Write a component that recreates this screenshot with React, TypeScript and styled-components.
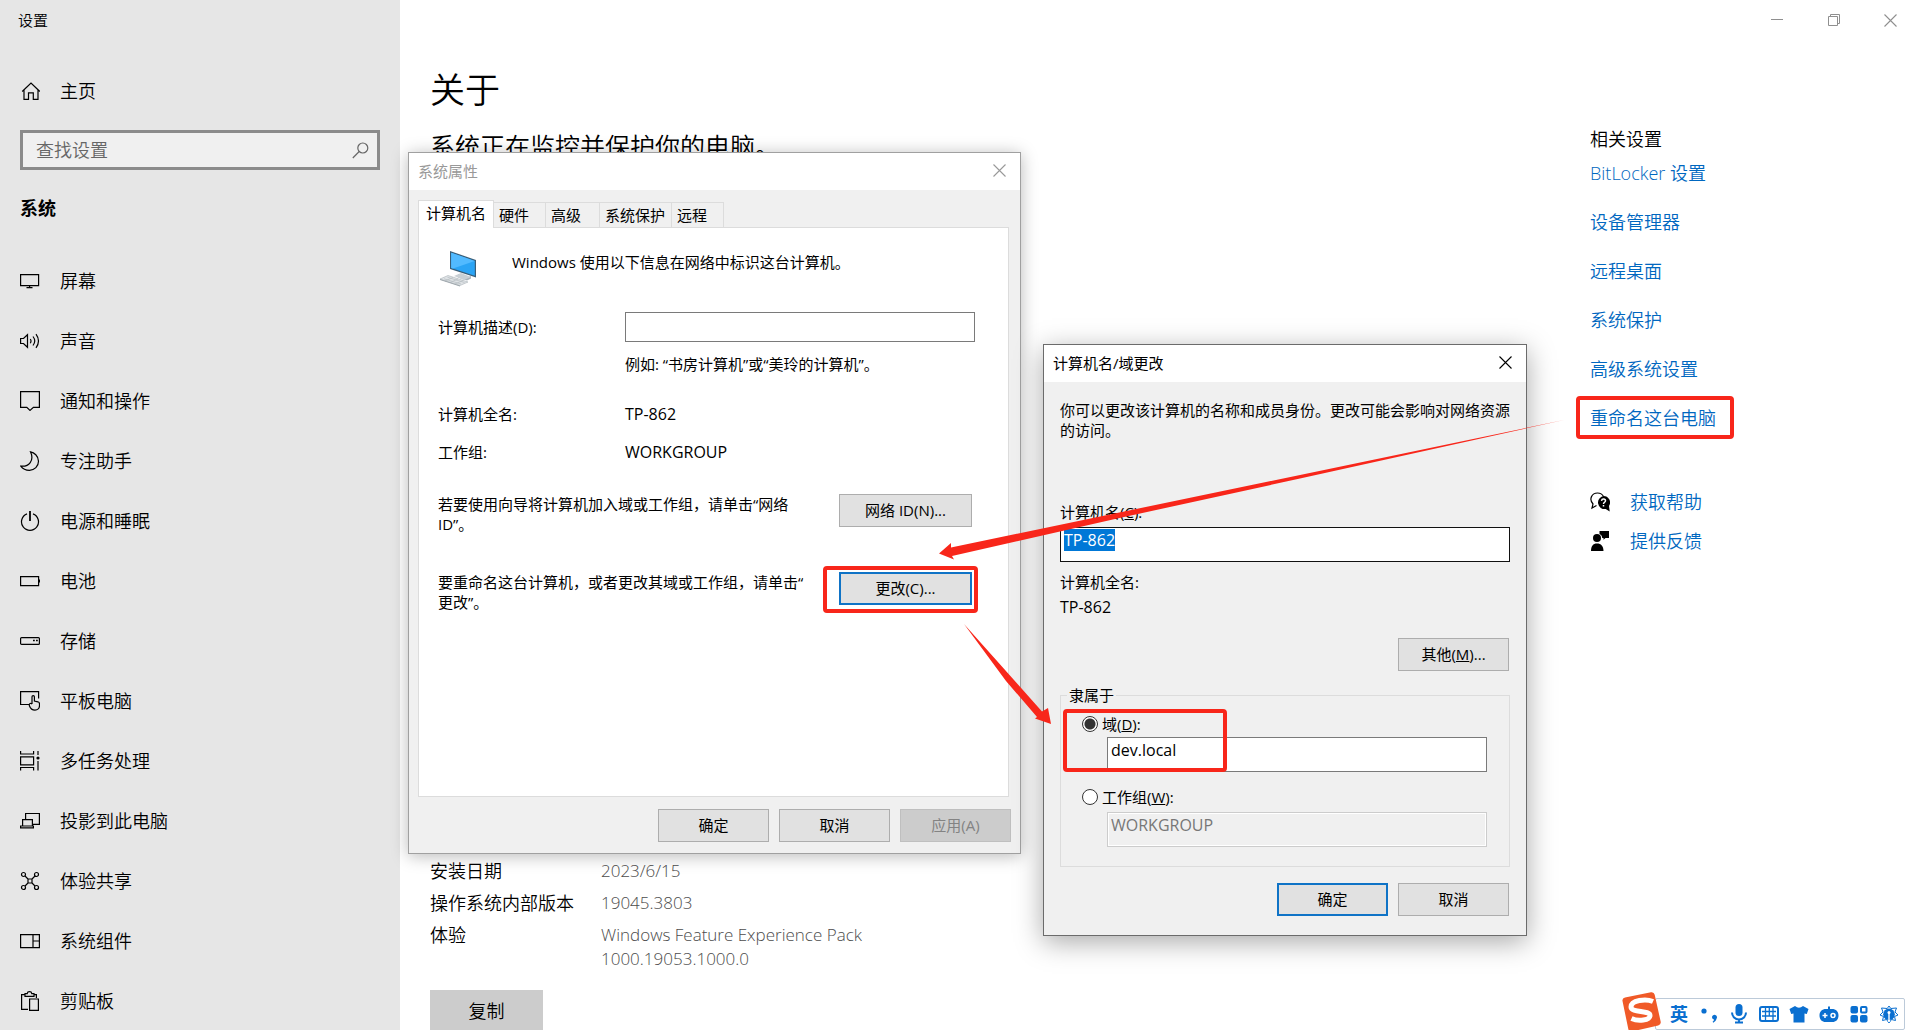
import React, { useEffect, useRef } from "react";
import styled, { createGlobalStyle, css } from "styled-components";

const FONT = `"Open Sans", "Noto Sans CJK SC", sans-serif`;
const RED = "#f8261a";

const GlobalStyle = createGlobalStyle`
  *, *::before, *::after { box-sizing: border-box; }
  body { margin: 0; background: #fff; overflow: hidden; }
  button, input { font: inherit; color: inherit; }
  p, h1, h2, dl, dd, ul { margin: 0; padding: 0; }
`;

/* ---------- Settings page ---------- */

const Desktop = styled.div`
  position: relative;
  display: flex;
  height: 100vh;
  overflow: hidden;
  background: #fff;
  color: #000;
  font-family: ${FONT};
  font-size: 18px;
  line-height: 24px;
  font-weight: 350;
`;

const Sidebar = styled.nav`
  flex: 0 0 400px;
  display: flex;
  flex-direction: column;
  background: #e6e6e6;
`;

const AppTitle = styled.div`
  padding: 10px 18px;
  font-size: 15px;
  line-height: 20px;
`;

const NavLink = styled.a<{ $home?: boolean }>`
  display: flex;
  align-items: center;
  gap: 20px;
  height: ${(p) => (p.$home ? 48 : 60)}px;
  margin-top: ${(p) => (p.$home ? 27 : 0)}px;
  padding-left: 20px;
  color: #000;
  text-decoration: none;
  flex-shrink: 0;
  svg { flex: none; }
`;

const SearchBox = styled.label`
  display: flex;
  align-items: center;
  height: 40px;
  flex-shrink: 0;
  margin: 15px 20px 0;
  padding: 0 8px 0 13px;
  border: 3px solid #8b8b8b;
  background: #f0f0f0;
`;

const SearchInput = styled.input`
  flex: 1;
  min-width: 0;
  padding: 0;
  border: 0;
  outline: 0;
  background: transparent;
  &::placeholder { color: #666; opacity: 1; }
`;

const SectionTitle = styled.h2`
  margin: 26px 20px 31px;
  font-size: 18px;
  line-height: 24px;
  font-weight: 700;
`;

const Content = styled.main`
  flex: 1;
  display: flex;
  flex-direction: column;
  min-width: 0;
`;

const WindowBar = styled.header`
  display: flex;
  justify-content: flex-end;
  height: 40px;
  padding-right: 1px;
`;

const WindowButton = styled.button`
  display: grid;
  place-items: center;
  width: 57px;
  height: 40px;
  padding: 0;
  border: 0;
  background: transparent;
  color: #8f8f8f;
`;

const Columns = styled.div`
  flex: 1;
  display: flex;
  justify-content: space-between;
  min-height: 0;
  padding-left: 30px;
`;

const About = styled.section`
  flex: 1;
`;

const PageTitle = styled.h1`
  padding-top: 26px;
  font-size: 35px;
  line-height: 48px;
  font-weight: 350;
`;

const Subtitle = styled.p`
  padding-top: 16px;
  font-size: 25px;
  line-height: 32px;
`;

const Specs = styled.dl`
  display: grid;
  grid-template-columns: 171px 290px;
  row-gap: 8px;
  margin-top: 697px;
  dd { color: #4c4c4c; font-size: 17px; }
`;

const CopyButton = styled.button`
  width: 113px;
  height: 42px;
  margin-top: 19px;
  border: 0;
  background: #ccc;
`;

const Related = styled.aside`
  flex: 0 0 330px;
  padding-top: 87px;
`;

const RelatedTitle = styled.h2`
  font-size: 18px;
  line-height: 24px;
  font-weight: 350;
`;

const RelatedLinks = styled.ul`
  display: flex;
  flex-direction: column;
  align-items: flex-start;
  gap: 25px;
  padding-top: 10px;
  list-style: none;
`;

const TextLink = styled.a`
  display: flex;
  align-items: center;
  gap: 20px;
  color: #0067c0;
  text-decoration: none;
  svg { color: #000; }
`;

const Support = styled.div`
  display: flex;
  flex-direction: column;
  gap: 15px;
  padding-top: 60px;
`;

/* ---------- Dialogs ---------- */

const Dialog = styled.section<{ $active?: boolean; $x: number; $y: number; $w: number }>`
  position: absolute;
  left: ${(p) => p.$x}px;
  top: ${(p) => p.$y}px;
  width: ${(p) => p.$w}px;
  border: 1px solid ${(p) => (p.$active ? "#6b6b6b" : "#a0a0a0")};
  background: #f0f0f0;
  box-shadow: ${(p) =>
    p.$active ? "0 6px 26px rgba(0,0,0,.34)" : "0 2px 16px rgba(0,0,0,.28)"};
  font-size: 15px;
  line-height: 20px;
  font-weight: 400;
`;

const TitleBar = styled.header<{ $muted?: boolean }>`
  display: flex;
  align-items: center;
  justify-content: space-between;
  height: 37px;
  padding: 0 0 2px 9px;
  background: #fff;
  color: ${(p) => (p.$muted ? "#999" : "#000")};
`;

const CloseButton = styled.button`
  display: grid;
  place-items: center;
  width: 42px;
  height: 35px;
  padding: 0;
  border: 0;
  background: transparent;
`;

const TabStrip = styled.div`
  display: flex;
  align-items: flex-end;
  padding: 10px 9px 0;
`;

const Tab = styled.button<{ $w: number }>`
  width: ${(p) => p.$w}px;
  height: 25px;
  padding: 0 0 0 5px;
  border: 1px solid #dcdcdc;
  border-left: 0;
  border-bottom: 0;
  background: #f0f0f0;
  text-align: left;
  white-space: nowrap;
  &[aria-selected="true"] {
    z-index: 1;
    height: 28px;
    margin-bottom: -1px;
    padding: 0 0 3px 7px;
    border-left: 1px solid #dcdcdc;
    background: #fff;
  }
`;

const TabPanel = styled.div`
  height: 570px;
  margin: 0 11px 0 9px;
  padding: 22px 19px 0;
  border: 1px solid #dcdcdc;
  background: #fff;
`;

const IntroRow = styled.div`
  display: grid;
  grid-template-columns: 74px 1fr;
  height: 36px;
  line-height: 24px;
`;

const FieldRow = styled.div<{ $gap: number }>`
  display: grid;
  grid-template-columns: 187px 350px;
  align-items: center;
  margin-top: ${(p) => p.$gap}px;
`;

const ActionRow = styled.div<{ $gap: number }>`
  display: grid;
  grid-template-columns: 401px 133px;
  align-items: start;
  height: 40px;
  margin-top: ${(p) => p.$gap}px;
  p { white-space: nowrap; }
`;

const Hint = styled.p`
  grid-column: 2;
`;

const Value = styled.div`
  font-size: 16px;
`;

const textBox = css`
  display: block;
  width: 100%;
  border-radius: 0;
  outline: 0;
  background: #fff;
`;

const DescriptionInput = styled.input`
  ${textBox}
  height: 30px;
  padding: 0 4px;
  border: 1px solid #7a7a7a;
`;

const TallInput = styled.input<{ $focused?: boolean }>`
  ${textBox}
  height: 35px;
  padding: 2px 3px 11px;
  font-size: 16px;
  line-height: 20px;
  border: 1px solid ${(p) => (p.$focused ? "#111" : "#7a7a7a")};
  &::selection { background: #0078d7; color: #fff; }
  &:disabled {
    border-color: #ccc;
    background: #f0f0f0;
    box-shadow: inset 0 0 0 1px #fff;
    color: #777;
  }
`;

const PushButton = styled.button<{ $primary?: boolean; $wide?: boolean }>`
  width: ${(p) => (p.$wide ? 133 : 111)}px;
  height: 33px;
  padding: 0 0 2px;
  border: ${(p) => (p.$primary ? "2px solid #0f73c6" : "1px solid #adadad")};
  background: #e1e1e1;
  &:disabled {
    border-color: #bfbfbf;
    background: #ccc;
    color: #838383;
  }
`;

const ButtonBar = styled.footer<{ $pad: string }>`
  display: flex;
  justify-content: flex-end;
  gap: 10px;
  padding: ${(p) => p.$pad};
`;

const ChangeBody = styled.div`
  padding: 18px 16px 0;
`;

const Stack = styled.div<{ $gap: number }>`
  margin-top: ${(p) => p.$gap}px;
`;

const FieldLabel = styled.label`
  display: block;
  margin-bottom: 5px;
`;

const MoreRow = styled.div`
  display: flex;
  justify-content: flex-end;
  padding: 21px 1px 0;
`;

const Membership = styled.fieldset`
  margin: 14px 0 0;
  padding: 9px 22px 19px 21px;
  border: 1px solid #dcdcdc;
  legend {
    margin-left: -15px;
    padding: 0 2px;
  }
`;

const Choice = styled.div`
  position: relative;
  & + & { margin-top: 15px; }
`;

const RadioLabel = styled.label`
  display: flex;
  align-items: center;
  gap: 4px;
  height: 20px;
`;

const Radio = styled.input`
  appearance: none;
  width: 16px;
  height: 16px;
  margin: 0;
  border: 1px solid #333;
  border-radius: 50%;
  background: #fff;
  &:checked { background: radial-gradient(circle, #333 0 5px, #fff 6px); }
`;

const ChoiceField = styled.div<{ $gap: number }>`
  padding: ${(p) => p.$gap}px 0 0 25px;
`;

/* ---------- Annotations ---------- */

const Anchor = styled.span`
  position: relative;
  display: block;
`;

const Highlight = styled.span<{ $inset: string }>`
  position: absolute;
  inset: ${(p) => p.$inset};
  border: 4px solid ${RED};
  border-radius: 4px;
  pointer-events: none;
`;

const Arrows = styled.svg`
  position: absolute;
  left: 930px;
  top: 410px;
  pointer-events: none;
`;

/* ---------- Input method bar ---------- */

const ImeBar = styled.div`
  position: absolute;
  right: 15px;
  bottom: 0;
  display: flex;
  height: 32px;
  padding-left: 8px;
  border: 1px solid #bccad9;
  border-radius: 2px;
  background: #fff;
  color: #0a6fd0;
`;

const ImeButton = styled.button`
  display: grid;
  place-items: center;
  width: 30px;
  height: 30px;
  padding: 0;
  border: 0;
  background: transparent;
  font-weight: 700;
`;

const ImeLogo = styled.svg`
  position: absolute;
  left: -36px;
  bottom: -2px;
`;

/* ---------- Icons ---------- */

const Icon = ({ children, size = 20 }: { children: React.ReactNode; size?: number }) => (
  <svg width={size} height={size} viewBox={`0 0 ${size} ${size}`} fill="none" stroke="currentColor" strokeWidth="1.2" aria-hidden="true">
    {children}
  </svg>
);

const Cross = () => (
  <svg width="13" height="13" viewBox="0 0 13 13" stroke="currentColor" strokeWidth="1.1" aria-hidden="true">
    <path d="M.5.5l12 12M12.5.5l-12 12" />
  </svg>
);

const navItems: { label: string; icon: React.ReactNode }[] = [
  { label: "屏幕", icon: <path d="M.6 3.6h18v11H.6zM9.6 14.6v2M6.5 16.6h6" /> },
  {
    label: "声音",
    icon: <path d="M.6 7.5v5h2.900l4 3.800V3.700l-4 3.800zM10.300 8q1.400 2 0 4.200M13 5.500q3.500 4.500 0 9M16 3.200q5 6.800 0 13.600" />,
  },
  { label: "通知和操作", icon: <path d="M.6.6h18.800v15.800h-6L10 19.400l-3.200-3H.6z" /> },
  {
    label: "专注助手",
    icon: <path d="M10.500.8c3.500.7 8 4 8 9.500 0 5-4 9-9 9-3.600 0-7-1.800-8.700-4.200C9 16 14.500 9.500 10.500.8z" />,
  },
  { label: "电源和睡眠", icon: <><path d="M7 2.900a8.500 8.500 0 1 0 6 0" /><path d="M10 0v10" strokeWidth="1.8" /></> },
  { label: "电池", icon: <><path d="M.6 5.600h18v9H.6z" /><path d="M19.400 8.500v3" strokeWidth="1.400" /></> },
  {
    label: "存储",
    icon: <><rect x=".6" y="6.600" width="18.800" height="6.800" rx="1" /><path d="M13 9.500h1.800M16 9.500h1.800" strokeWidth="1.500" /></>,
  },
  {
    label: "平板电脑",
    icon: <><path d="M9 13.500H.6V.6h18v7" /><path d="M12 13V5.800a1.200 1.200 0 0 1 2.400 0V10l3.500.8q1.600.5 1.600 2.200v1.500c0 2.800-2 4.700-4.500 4.700-3 0-4.500-1.500-5.500-4.200-.8-2.200.8-3.400 2.500-2" /></>,
  },
  {
    label: "多任务处理",
    icon: <><path d="M.6 0v3h13V0M.6 19.500v-3h13v3M.6 5.800h13v8H.6zM18 0v4M18 10v9.500" /><circle cx="18" cy="7" r="1.600" fill="currentColor" stroke="none" /></>,
  },
  { label: "投影到此电脑", icon: <path d="M5.600 8.500v-6h13.800v10.800h-7M2.600 8.600h9.800v6.400H2.600zM.6 15h12.800v1.800H.6z" /> },
  {
    label: "体验共享",
    icon: <><circle cx="3.500" cy="3.500" r="2" /><circle cx="16.500" cy="3.500" r="2" /><circle cx="3.500" cy="16.500" r="2" /><circle cx="16.500" cy="16.500" r="2" /><path d="M5 5l3 3M15 5l-3 3M5 15l3-3M15 15l-3-3M8 8h4v4H8z" /></>,
  },
  { label: "系统组件", icon: <path d="M.6 3.600h18.800v13H.6zM13 3.600v13M13 10h6.400" /> },
  {
    label: "剪贴板",
    icon: <path d="M8 18.400H1.600V3.600H5M14 3.600h2.400V7M9.600 8h8.800v11.400H9.600zM5 2.600h2.200c.3-2.600 4.300-2.600 4.600 0H14v2.800H5z" />,
  },
];

const ComputerIcon = () => (
  <svg width="40" height="38" viewBox="0 0 40 38" aria-hidden="true">
    <path d="M20 24l9 3.500 4-1.500v2.500l-4 2-9-3z" fill="#a9b3bb" />
    <path d="M16 26l7-3 10 4-7 3z" fill="#c9d0d5" />
    <path d="M12 1l26 9v17.500L12 19z" fill="#3a5e78" />
    <path d="M13.200 2.700L36.800 11v14.800L13.200 18z" fill="#2ba4f5" />
    <path d="M13.200 2.700L36.800 11 15 18.600l-1.800-.6z" fill="#52baff" />
    <path d="M2 29l8-3.500L30 32l-8 3.500z" fill="#dfe3e6" stroke="#a9b1b7" strokeWidth=".6" />
    <path d="M6 28.800l17 5.200M9.500 27.300l17 5.200M7 31l8-3.500M12 32.500l8-3.500M17 34l8-3.500" stroke="#b4bbc0" strokeWidth=".7" />
    <path d="M2 29l20 6.500v1L2 30z" fill="#9da5ab" />
  </svg>
);

const ImeGlyphs = [
  {
    name: "标点",
    icon: <><circle cx="5" cy="7" r="2.600" /><path d="M13 13a2.500 2.500 0 1 1 4.600 1.600c-.4 1.800-1.600 3.200-3.300 4.200l-.7-1c.9-.8 1.400-1.500 1.500-2.300-1.200-.2-2.100-1.200-2.100-2.500z" /></>,
  },
  {
    name: "语音",
    icon: <><rect x="6.500" y="0" width="7" height="12" rx="3.500" /><path d="M3 8.500a7 7 0 0 0 14 0M6 18.500h8M10 15.500v3" fill="none" stroke="currentColor" strokeWidth="2" /></>,
  },
  {
    name: "键盘",
    icon: <><rect x="1" y="3" width="18" height="14" rx="2" fill="none" stroke="currentColor" strokeWidth="2" /><path d="M3 7.500h14M3 12h14M6.500 4v8M10.300 4v8M14 4v8M6.500 12v4M14 12v4" fill="none" stroke="currentColor" strokeWidth="1.300" /></>,
  },
  { name: "皮肤", icon: <path d="M6 2q4 3.500 8 0l5.500 3-1.700 5-2.300-.5V18.500h-11V9.500L2.200 10 .5 5z" /> },
  {
    name: "游戏",
    icon: <><path d="M9 2.500h2V5h2c4 0 6.500 2.400 6.500 6.500S17 18 13.500 18h-7C3 18 .5 15.600.5 11.500S3 5 7 5h2z" /><path d="M3.500 11.500h5M6 9v5" stroke="#fff" strokeWidth="1.500" /><circle cx="14" cy="11.500" r="2" fill="none" stroke="#fff" strokeWidth="1.500" /></>,
  },
  {
    name: "工具箱",
    icon: <><rect x="1.500" y="2" width="7.500" height="7.500" rx="2" /><rect x="1.500" y="11" width="7.500" height="7.500" rx="2" /><rect x="11" y="11" width="7.500" height="7.500" rx="2" /><rect x="12" y="3" width="5.500" height="5.500" rx="1" fill="none" stroke="currentColor" strokeWidth="2" /></>,
  },
  {
    name: "设置",
    icon: <><path d="M10 2l1.800 2.500 5.700-.5-1.500 4 3 3-3.500 1.500 1 4-4-1L10 19l-2.500-3.500-4 1 1-4L1 11l3-3-1.500-4 5.700.5z" fill="none" stroke="currentColor" strokeWidth="1" /><circle cx="10" cy="10.300" r="5.800" /><path d="M10 9v9" stroke="#fff" strokeWidth="1.400" /><circle cx="10" cy="8.500" r="1.500" fill="#fff" /></>,
  },
];

const relatedLinks = ["BitLocker 设置", "设备管理器", "远程桌面", "系统保护", "高级系统设置", "重命名这台电脑"];

const tabs = [
  { label: "计算机名", width: 76 },
  { label: "硬件", width: 52 },
  { label: "高级", width: 54 },
  { label: "系统保护", width: 72 },
  { label: "远程", width: 52 },
];

/* ---------- Sections ---------- */

const SystemProperties = () => (
  <Dialog $x={408} $y={152} $w={613} aria-label="系统属性">
    <TitleBar $muted>
      系统属性
      <CloseButton aria-label="关闭"><Cross /></CloseButton>
    </TitleBar>
    <TabStrip role="tablist">
      {tabs.map((t, i) => (
        <Tab key={t.label} role="tab" aria-selected={i === 0} $w={t.width}>{t.label}</Tab>
      ))}
    </TabStrip>
    <TabPanel role="tabpanel">
      <IntroRow>
        <ComputerIcon />
        <p>Windows 使用以下信息在网络中标识这台计算机。</p>
      </IntroRow>
      <FieldRow $gap={26}>
        <label htmlFor="description">计算机描述(D):</label>
        <DescriptionInput id="description" />
      </FieldRow>
      <FieldRow $gap={12}>
        <Hint>例如: “书房计算机”或“美玲的计算机”。</Hint>
      </FieldRow>
      <FieldRow $gap={30}>
        <span>计算机全名:</span>
        <Value>TP-862</Value>
      </FieldRow>
      <FieldRow $gap={18}>
        <span>工作组:</span>
        <Value>WORKGROUP</Value>
      </FieldRow>
      <ActionRow $gap={32}>
        <p>若要使用向导将计算机加入域或工作组，请单击“网络<br />ID”。</p>
        <PushButton $wide>网络 ID(N)...</PushButton>
      </ActionRow>
      <ActionRow $gap={38}>
        <p>要重命名这台计算机，或者更改其域或工作组，请单击“<br />更改”。</p>
        <Anchor>
          <PushButton $wide $primary>更改(C)...</PushButton>
          <Highlight $inset="-6px -6px -8px -16px" />
        </Anchor>
      </ActionRow>
    </TabPanel>
    <ButtonBar $pad="12px 9px 11px">
      <PushButton>确定</PushButton>
      <PushButton>取消</PushButton>
      <PushButton disabled>应用(A)</PushButton>
    </ButtonBar>
  </Dialog>
);

const NameChange = () => {
  const nameRef = useRef<HTMLInputElement>(null);
  useEffect(() => {
    nameRef.current?.focus();
    nameRef.current?.select();
  }, []);
  return (
    <Dialog $active $x={1043} $y={344} $w={484} aria-label="计算机名/域更改">
      <TitleBar>
        计算机名/域更改
        <CloseButton aria-label="关闭"><Cross /></CloseButton>
      </TitleBar>
      <ChangeBody>
        <p>你可以更改该计算机的名称和成员身份。更改可能会影响对网络资源的访问。</p>
        <Stack $gap={62}>
          <FieldLabel htmlFor="name">计算机名(<u>C</u>):</FieldLabel>
          <TallInput id="name" ref={nameRef} $focused defaultValue="TP-862" />
        </Stack>
        <Stack $gap={10}>计算机全名:</Stack>
        <Stack $gap={5}><Value>TP-862</Value></Stack>
        <MoreRow>
          <PushButton>其他(<u>M</u>)...</PushButton>
        </MoreRow>
        <Membership>
          <legend>隶属于</legend>
          <Choice>
            <RadioLabel>
              <Radio type="radio" name="member" defaultChecked />
              <span>域(<u>D</u>):</span>
            </RadioLabel>
            <ChoiceField $gap={3}>
              <TallInput aria-label="域" defaultValue="dev.local" />
            </ChoiceField>
            <Highlight $inset="-5px 260px 0 -19px" />
          </Choice>
          <Choice>
            <RadioLabel>
              <Radio type="radio" name="member" />
              <span>工作组(<u>W</u>):</span>
            </RadioLabel>
            <ChoiceField $gap={5}>
              <TallInput aria-label="工作组" defaultValue="WORKGROUP" disabled />
            </ChoiceField>
          </Choice>
        </Membership>
      </ChangeBody>
      <ButtonBar $pad="16px 17px 19px">
        <PushButton $primary>确定</PushButton>
        <PushButton>取消</PushButton>
      </ButtonBar>
    </Dialog>
  );
};

export default function App() {
  return (
    <>
      <GlobalStyle />
      <Desktop>
        <Sidebar>
          <AppTitle>设置</AppTitle>
          <NavLink href="#home" $home>
            <Icon><path d="M2.200 10.500L11 2l8.800 8.500M4 9v9.400h4.500v-6.600h4.800v6.600H18V9" /></Icon>
            主页
          </NavLink>
          <SearchBox>
            <SearchInput placeholder="查找设置" aria-label="查找设置" />
            <svg width="17" height="17" viewBox="0 0 17 17" fill="none" stroke="#666" strokeWidth="1.200" aria-hidden="true">
              <circle cx="10.800" cy="6" r="5" />
              <path d="M7.200 9.500L.8 16" />
            </svg>
          </SearchBox>
          <SectionTitle>系统</SectionTitle>
          {navItems.map((n) => (
            <NavLink key={n.label} href={`#${n.label}`}>
              <Icon>{n.icon}</Icon>
              {n.label}
            </NavLink>
          ))}
        </Sidebar>
        <Content>
          <WindowBar>
            <WindowButton aria-label="最小化">
              <svg width="12" height="12" stroke="currentColor"><path d="M0 5.500h12" /></svg>
            </WindowButton>
            <WindowButton aria-label="还原">
              <svg width="12" height="12" fill="none" stroke="currentColor"><path d="M.5 2.500h9v9h-9zM2.500 2.500v-2h9v9h-2" /></svg>
            </WindowButton>
            <WindowButton aria-label="关闭"><Cross /></WindowButton>
          </WindowBar>
          <Columns>
            <About>
              <PageTitle>关于</PageTitle>
              <Subtitle>系统正在监控并保护你的电脑。</Subtitle>
              <Specs>
                <dt>安装日期</dt>
                <dd>2023/6/15</dd>
                <dt>操作系统内部版本</dt>
                <dd>19045.3803</dd>
                <dt>体验</dt>
                <dd>Windows Feature Experience Pack 1000.19053.1000.0</dd>
              </Specs>
              <CopyButton>复制</CopyButton>
            </About>
            <Related>
              <RelatedTitle>相关设置</RelatedTitle>
              <RelatedLinks>
                {relatedLinks.map((l, i) => (
                  <li key={l}>
                    <Anchor>
                      <TextLink href={`#${l}`}>{l}</TextLink>
                      {i === relatedLinks.length - 1 && <Highlight $inset="-10px -18px -9px -14px" />}
                    </Anchor>
                  </li>
                ))}
              </RelatedLinks>
              <Support>
                <TextLink href="#help">
                  <Icon>
                    <path d="M6.500 13.500L2 16l1-4C-1.500 7 2 1 7.500 1c3 0 5 1.500 6 3.500" />
                    <path d="M13.500 4a6.500 6.500 0 0 1 5.500 10l.7 5.500-4-2.500A6.500 6.500 0 1 1 13.500 4z" fill="currentColor" stroke="none" />
                    <path d="M11.500 8.800c.3-2.500 4-2.200 4 0 0 1.500-2 1.500-2 3.200M13.500 13v1.500" stroke="#fff" strokeWidth="1.500" />
                  </Icon>
                  获取帮助
                </TextLink>
                <TextLink href="#feedback">
                  <Icon>
                    <g fill="currentColor" stroke="none">
                      <circle cx="7" cy="7" r="4" />
                      <path d="M1 20c0-5 2-7.500 6-7.500s6.500 2.500 6.500 7.500zM9.500 0H19v7h-3.500l-2 1.800V7h-1.300c0-2-1-3.300-2.700-4z" />
                    </g>
                  </Icon>
                  提供反馈
                </TextLink>
              </Support>
            </Related>
          </Columns>
        </Content>

        <SystemProperties />
        <NameChange />

        <Arrows width="640" height="330" viewBox="930 410 640 330" fill={RED} aria-hidden="true">
          <path d="M1564 420L951 547.500 951 543 939 553.500 954 559.500 952 556 1115 519 1300 478.500z" />
          <path d="M964 624L1042 711.500 1048 708 1051 724 1035 718.500 1037 717 1006 681z" />
        </Arrows>

        <ImeBar>
          <ImeLogo width="42" height="40" viewBox="0 0 42 40" aria-hidden="true">
            <path d="M5 6.500L31 1.200q3-.5 3.700 2.500l6 27q.5 3-2.500 3.700L12 40.500q-3 .5-3.700-2.500L2.500 10q-.5-3 2.500-3.500z" fill="#f05a28" />
            <path d="M33 10.500c-7-3-22-1.500-22 5.500 0 6 19 3 19 8.500 0 5-12 6-18.500 3" fill="none" stroke="#fff" strokeWidth="5" />
          </ImeLogo>
          <ImeButton aria-label="中英文切换">英</ImeButton>
          {ImeGlyphs.map((g) => (
            <ImeButton key={g.name} aria-label={g.name}>
              <svg width="20" height="20" viewBox="0 0 20 20" fill="currentColor" aria-hidden="true">{g.icon}</svg>
            </ImeButton>
          ))}
        </ImeBar>
      </Desktop>
    </>
  );
}
